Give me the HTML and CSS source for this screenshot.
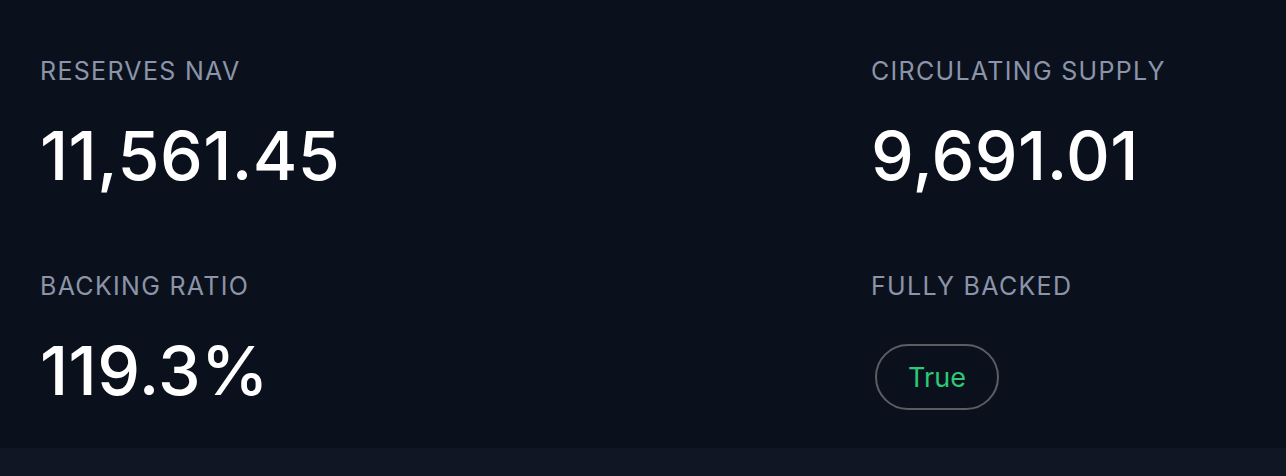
FILE: index.html
```html
<!DOCTYPE html>
<html>
<head>
<meta charset="utf-8">
<link rel="stylesheet" href="styles.css">
</head>
<body>
<section class="card">
  <div class="stat">
    <div class="label">RESERVES NAV</div>
    <div class="value">11,561.45</div>
  </div>
  <div class="stat">
    <div class="label">CIRCULATING SUPPLY</div>
    <div class="value">9,691.01</div>
  </div>
  <div class="stat">
    <div class="label">BACKING RATIO</div>
    <div class="value">119.3%</div>
  </div>
  <div class="stat">
    <div class="label">FULLY BACKED</div>
    <div class="pill-row"><span class="pill">True</span></div>
  </div>
</section>
</body>
</html>
```
FILE: styles.css
```css
html, body {
  margin: 0;
  padding: 0;
  background: #111624;
  font-family: Inter, "Noto Sans", sans-serif;
}
.card {
  background: #0b111c;
  height: 448px;
  box-sizing: border-box;
  padding: 55px 40px 0 40px;
  display: grid;
  grid-template-columns: 831px 1fr;
  grid-template-rows: 215px auto;
}
.label {
  color: #8b94a9;
  font-size: 25px;
  line-height: 32px;
  letter-spacing: 1.3px;
}
.value {
  color: #ffffff;
  font-size: 68px;
  font-weight: 500;
  line-height: 80px;
  margin-top: 28px;
  letter-spacing: 0.4px;
}
.pill-row {
  margin-top: 42px;
  display: flex;
}
.pill {
  display: inline-flex;
  align-items: center;
  justify-content: center;
  margin-left: 4px;
  width: 124px;
  height: 66px;
  box-sizing: border-box;
  border: 2px solid #5b5d62;
  border-radius: 33px;
  color: #2bc978;
  font-size: 27px;
}
```
